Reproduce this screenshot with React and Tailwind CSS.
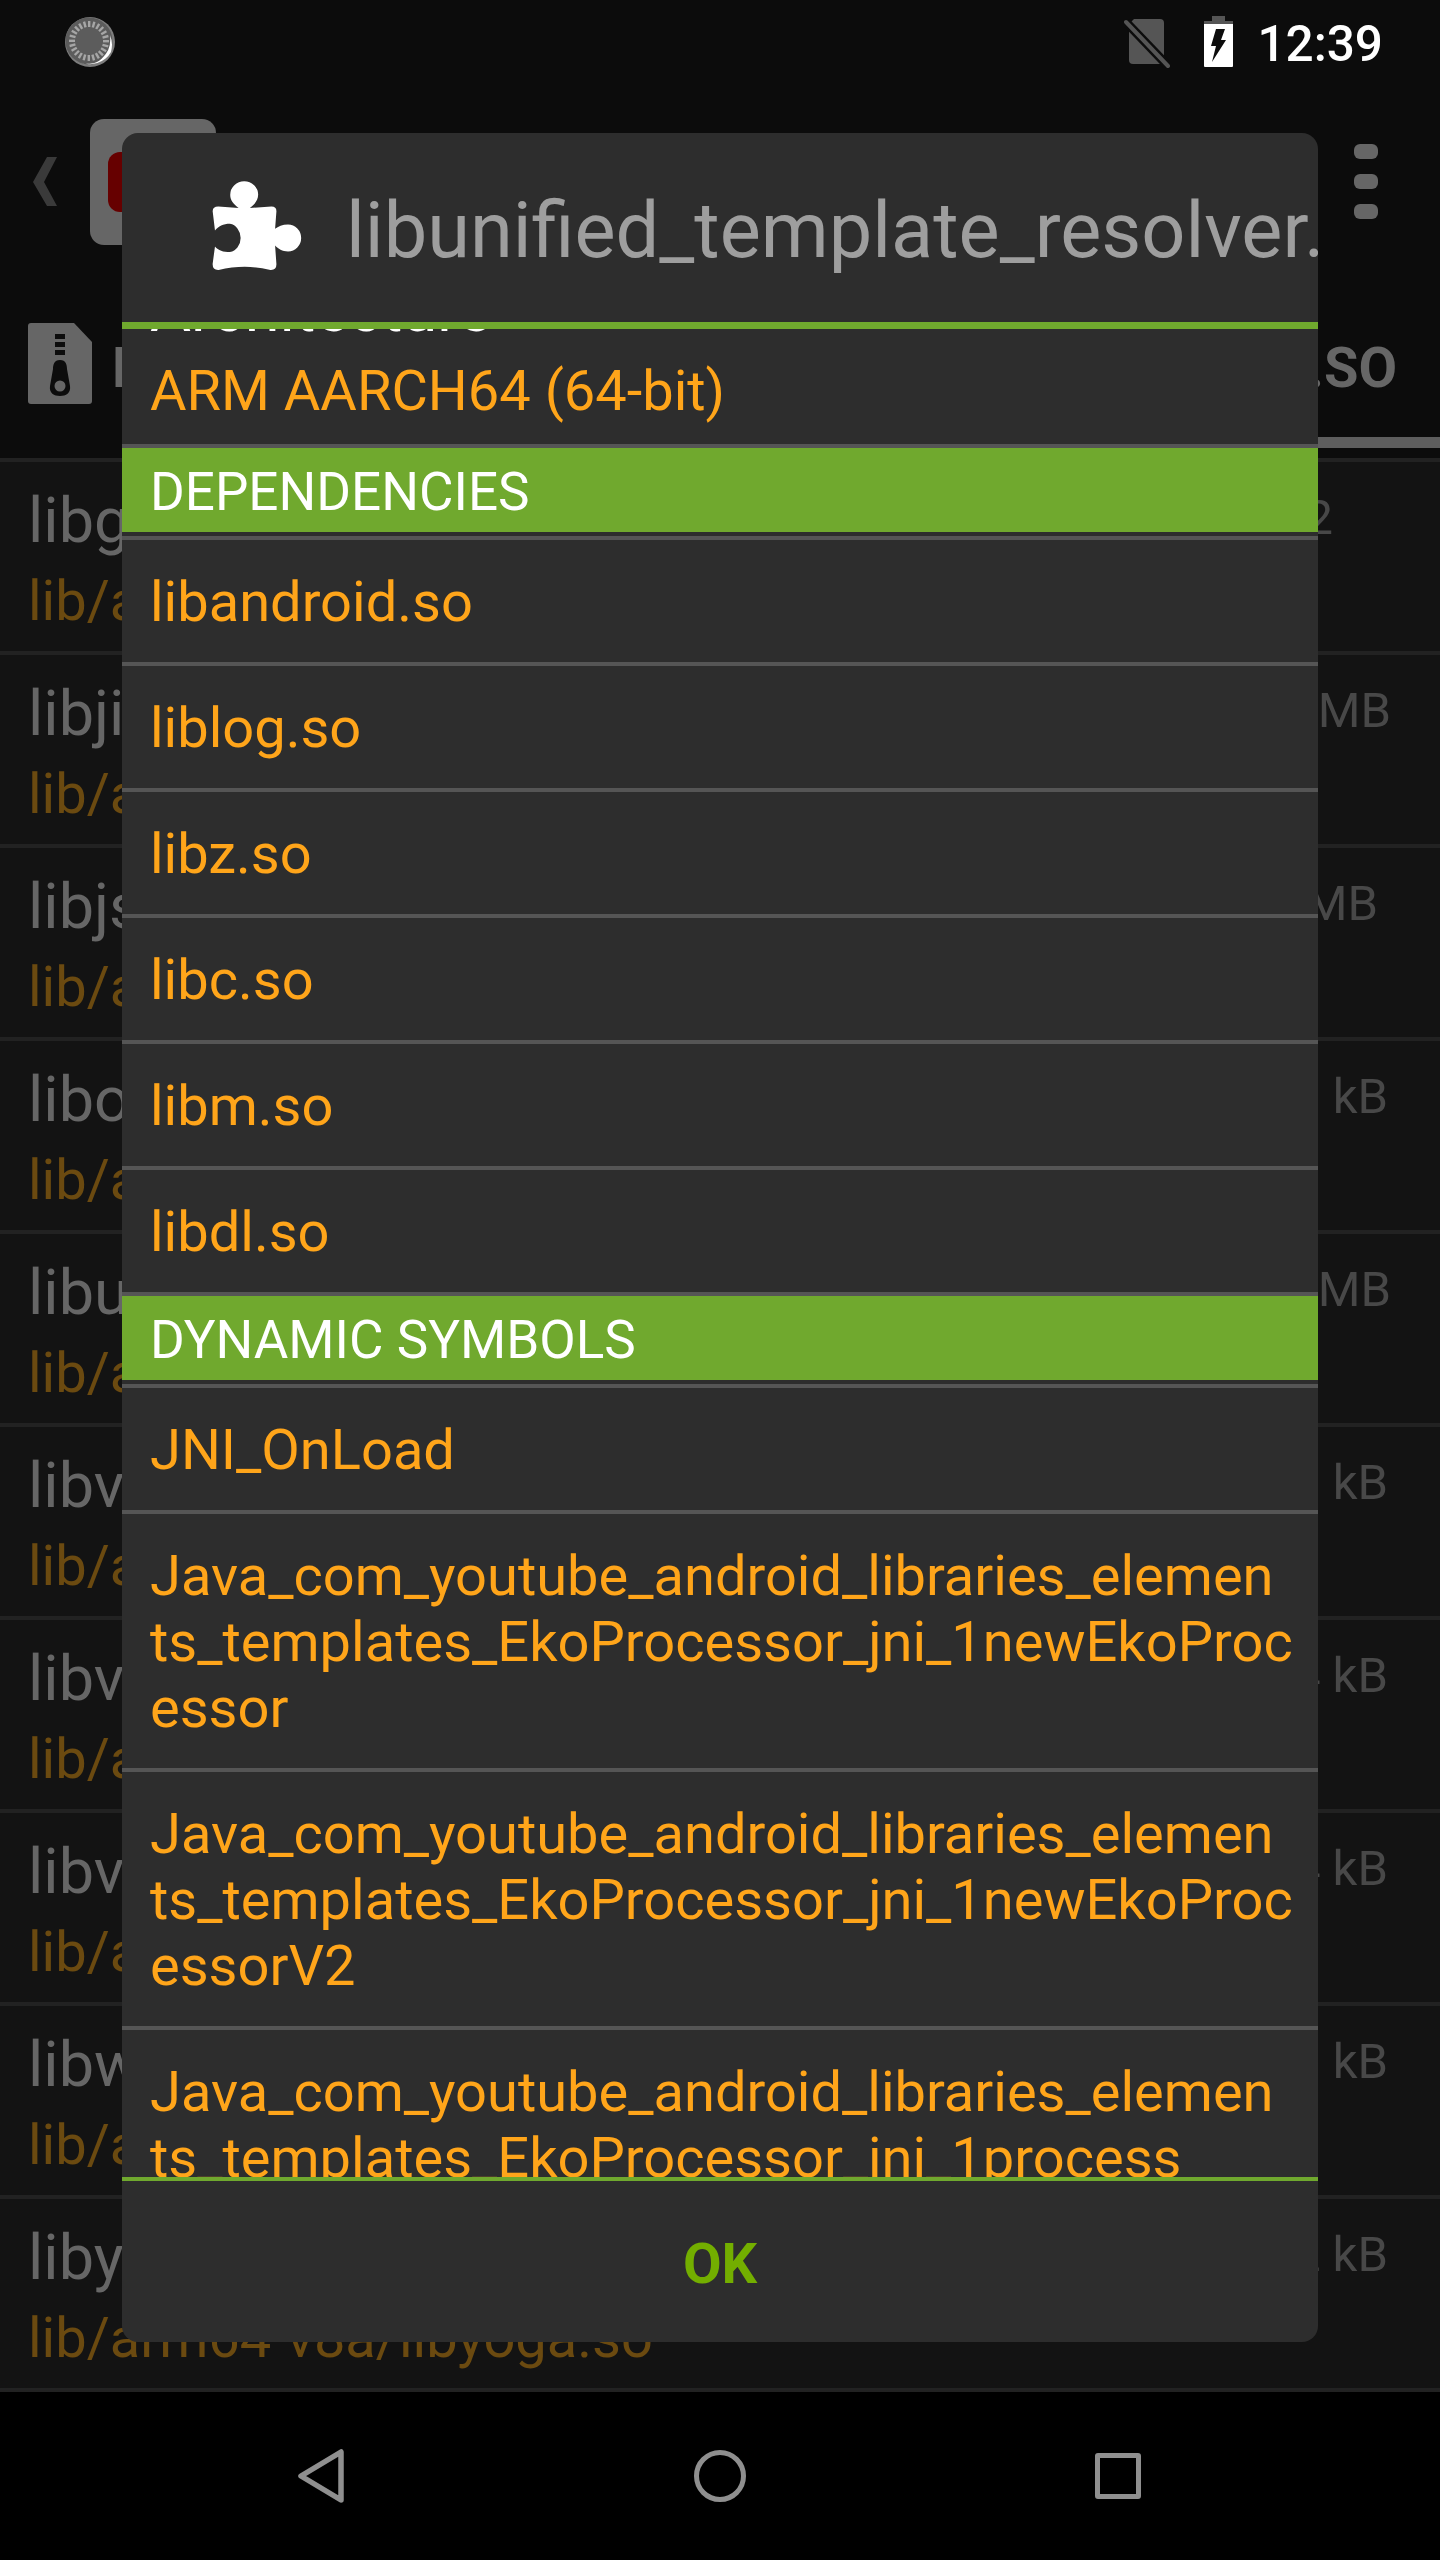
const rows = [
  { name: "libgvr.so", path: "lib/arm64-v8a/libgvr.so", size: "3.2", mr: "mr-[107px]" },
  { name: "libjingle_peerconnection_so.so", path: "lib/arm64-v8a/libjingle.so", size: "8.8 MB", mr: "mr-[49px]" },
  { name: "libjsc.so", path: "lib/arm64-v8a/libjsc.so", size: "3.9 MB", mr: "mr-[62px]" },
  { name: "libopuscodec.so", path: "lib/arm64-v8a/libopuscodec.so", size: "390 kB", mr: "mr-[52px]" },
  { name: "libunified_template_resolver.so", path: "lib/arm64-v8a/libunified.so", size: "2.6 MB", mr: "mr-[49px]" },
  { name: "libvpx.so", path: "lib/arm64-v8a/libvpx.so", size: "680 kB", mr: "mr-[52px]" },
  { name: "libvpxJNI.so", path: "lib/arm64-v8a/libvpxJNI.so", size: "14 kB", mr: "mr-[52px]" },
  { name: "libvpxV2JNI.so", path: "lib/arm64-v8a/libvpxV2JNI.so", size: "14 kB", mr: "mr-[52px]" },
  { name: "libwebp.so", path: "lib/arm64-v8a/libwebp.so", size: "150 kB", mr: "mr-[52px]" },
  { name: "libyoga.so", path: "lib/arm64-v8a/libyoga.so", size: "72 kB", mr: "mr-[52px]" },
];

const deps = ["libandroid.so", "liblog.so", "libz.so", "libc.so", "libm.so", "libdl.so"];

const symbols = [
  "JNI_OnLoad",
  "Java_com_youtube_android_libraries_elemen\nts_templates_EkoProcessor_jni_1newEkoProc\nessor",
  "Java_com_youtube_android_libraries_elemen\nts_templates_EkoProcessor_jni_1newEkoProc\nessorV2",
  "Java_com_youtube_android_libraries_elemen\nts_templates_EkoProcessor_jni_1process",
];

function Spinner() {
  const ticks = Array.from({ length: 24 }, (_, i) => i * 15);
  return (
    <svg width="52" height="52" viewBox="0 0 52 52">
      <circle cx="26" cy="26" r="25" fill="#7d7d7d" />
      <circle cx="25" cy="25" r="23.5" fill="#5c5c5c" />
      {ticks.map((a) => (
        <rect key={a} x="24" y="5" width="2.4" height="6" fill="#a6a6a6" transform={`rotate(${a} 25 25)`} />
      ))}
      <path d="M46 19 A22 25 0 0 1 16 46 A24 24 0 0 0 47 36 A26 26 0 0 0 46 19 Z" fill="#ffffff" />
    </svg>
  );
}

function Puzzle() {
  return (
    <svg width="93" height="93" viewBox="630 175 280 280" className="-mt-[5px] shrink-0">
      <path
        fill="#ffffff"
        d="M716 262 C700 250 690 238 691 222 A42 40 0 1 1 775 222 C775 238 765 252 750 262 L815 258 Q830 258 830 272 L826 325 C835 318 848 312 865 312 A39 40 0 1 1 865 393 C848 393 835 385 826 375 L830 432 Q830 450 812 449 C760 436 710 436 656 449 Q637 450 638 430 L645 378 C655 390 670 395 690 395 A38 43 0 0 0 690 310 C670 310 655 318 645 330 L638 272 Q638 258 655 258 Z"
      />
    </svg>
  );
}

function Item({ text }) {
  return (
    <div className="border-b-4 border-[#555555] pb-[27px] pl-[28px] pt-[29px] text-[56px] leading-[66px] whitespace-pre-line text-[#ffa51a]">
      {text}
    </div>
  );
}

function Section({ text }) {
  return (
    <div className="border-b-4 border-[#555555] pb-[4px]">
      <div className="h-[84px] bg-[#70a92e] px-[28px] pt-[13px] text-[53px] leading-[62px] text-white">{text}</div>
    </div>
  );
}

export default function App() {
  return (
    <div className="relative h-[2560px] w-[1440px] overflow-hidden bg-black font-['Roboto',sans-serif]">
      <div className="flex h-[96px] items-center bg-[#0c0c0c] pb-[12px] pl-[64px] pr-[57px]">
        <Spinner />
        <div className="ml-auto flex items-center">
          <svg width="46" height="52" viewBox="0 0 46 52">
            <path d="M10 3 H36 Q40 3 40 7 V48 H9 Q5 48 5 44 V8 Z" fill="#555555" />
            <path d="M2 6 L44 50" stroke="#0c0c0c" strokeWidth="9" />
            <path d="M2 6 L44 50" stroke="#555555" strokeWidth="4" strokeLinecap="round" />
          </svg>
          <svg width="29" height="52" viewBox="0 0 29 52" className="ml-[34px]">
            <rect x="8" y="0" width="13" height="6" fill="#555555" />
            <rect x="0" y="5" width="29" height="3" fill="#555555" />
            <path d="M0 8 H29 V50 Q29 51 28 51 H1 Q0 51 0 50 Z" fill="#ffffff" />
            <path d="M12 13 H21 L17 24 H22 L8 46 L12 30 H7 Z" fill="#0c0c0c" />
          </svg>
          <span className="ml-[24px] mt-[3px] text-[49.5px] font-medium leading-[58px] text-white">12:39</span>
        </div>
      </div>

      <div className="relative flex h-[224px] items-start bg-[#0c0c0c] pl-[33px]">
        <svg width="24" height="50" viewBox="33 157 24 50" className="mt-[61px]">
          <path d="M47 157 H57 L44 182 L57 206 H47 L33 182 Z" fill="#3a3a3a" />
        </svg>
        <div className="ml-[33px] mt-[23px] flex h-[126px] w-[126px] items-center rounded-[14px] bg-[#666666] pl-[18px]">
          <div className="h-[60px] w-[90px] rounded-[12px] bg-[#660000]" />
        </div>
        <div className="ml-auto mr-[62px] mt-[48px] flex flex-col gap-[15px]">
          <div className="h-[15px] w-[24px] rounded-[6px] bg-[#666666]" />
          <div className="h-[15px] w-[24px] rounded-[6px] bg-[#666666]" />
          <div className="h-[15px] w-[24px] rounded-[6px] bg-[#666666]" />
        </div>
      </div>

      <div className="bg-[#0c0c0c]">
        <div className="flex h-[128px] items-start pl-[28px] pr-[43px] text-[56px] font-bold leading-[66px] text-[#666666]">
          <svg width="64" height="81" viewBox="0 0 64 81" className="mt-[3px] shrink-0">
            <path d="M3 0 H46 L64 19 V78 Q64 81 61 81 H3 Q0 81 0 78 V3 Q0 0 3 0 Z" fill="#666666" />
            <rect x="27" y="11" width="10" height="5" fill="#0c0c0c" />
            <rect x="27" y="19" width="10" height="5" fill="#0c0c0c" />
            <rect x="27" y="27" width="10" height="5" fill="#0c0c0c" />
            <path d="M32 37 C26 37 25 42 25 46 L22 63 C21 70 26 73 32 73 C38 73 43 70 42 63 L39 46 C39 42 38 37 32 37 Z" fill="#0c0c0c" />
            <circle cx="32" cy="63" r="5.5" fill="#666666" />
          </svg>
          <span className="ml-[20px] mt-[15px] whitespace-nowrap">LIBUNIFIED</span>
          <span className="ml-auto mt-[15px]">.SO</span>
        </div>
        <div className="-mt-[11px] ml-[200px] h-[11px] bg-[#5e5e5e]" />
        <div className="h-[10px]" />
        <div className="h-[4px] bg-[#222222]" />
      </div>

      <div className="bg-[#131313]">
        {rows.map((r) => (
          <div key={r.name} className="flex h-[193px] items-start justify-between border-b-4 border-[#222222]">
            <div className="pl-[28px]">
              <div className="mt-[22px] whitespace-nowrap text-[63px] leading-[74px] text-[#666666]">{r.name}</div>
              <div className="mt-[10px] whitespace-nowrap text-[56px] leading-[66px] text-[#6b4a10]">{r.path}</div>
            </div>
            <div className={`mt-[27px] whitespace-nowrap text-[49px] leading-[58px] text-[#484848] ${r.mr}`}>{r.size}</div>
          </div>
        ))}
      </div>

      <div className="flex h-[168px] items-center bg-black">
        <svg width="48" height="56" viewBox="0 0 48 56" className="ml-[297px] shrink-0">
          <path d="M44 4 V52 L4 28 Z" fill="none" stroke="#8f8f8f" strokeWidth="5.5" strokeLinejoin="round" />
        </svg>
        <div className="ml-[349px] h-[52px] w-[52px] shrink-0 rounded-full border-[5px] border-[#8f8f8f]" />
        <div className="ml-[349px] h-[46px] w-[46px] shrink-0 rounded-[3px] border-[5px] border-[#8f8f8f]" />
      </div>

      <div className="absolute left-[122px] top-[133px] flex h-[2209px] w-[1196px] flex-col overflow-hidden rounded-[16px] bg-[#2d2d2d]">
        <div className="flex h-[189px] shrink-0 items-center overflow-hidden pl-[88px]">
          <Puzzle />
          <span className="ml-[43px] mt-[6px] whitespace-nowrap text-[77.5px] leading-[90px] text-[#9e9e9e]">
            libunified_template_resolver.so
          </span>
        </div>
        <div className="h-[7px] shrink-0 bg-[#70a92e]" />
        <div className="min-h-0 flex-1 overflow-hidden">
          <div className="-mt-[56px] border-b-4 border-[#555555] px-[28px] pb-[20px]">
            <div className="text-[63px] leading-[74px] text-white">Architecture</div>
            <div className="mt-[11px] text-[56px] leading-[66px] text-[#ffa51a]">ARM AARCH64 (64-bit)</div>
          </div>
          <Section text="DEPENDENCIES" />
          {deps.map((d) => (
            <Item key={d} text={d} />
          ))}
          <Section text="DYNAMIC SYMBOLS" />
          {symbols.map((s) => (
            <Item key={s} text={s} />
          ))}
        </div>
        <div className="h-[4px] shrink-0 bg-[#70a92e]" />
        <div className="flex h-[161px] shrink-0 items-center justify-center pt-[4px] text-[56px] font-bold leading-[66px] text-[#73ae00]">
          OK
        </div>
      </div>
    </div>
  );
}
